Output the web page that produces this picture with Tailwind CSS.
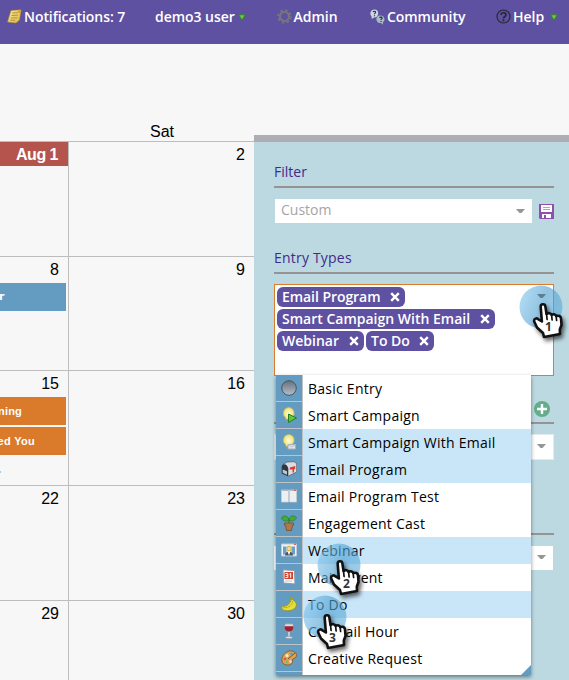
<!DOCTYPE html>
<html lang="en">
<head>
<meta charset="utf-8">
<title>Calendar</title>
<script src="https://cdn.jsdelivr.net/npm/@tailwindcss/browser@4"></script>
</head>
<body class="w-[569px] h-[680px] overflow-hidden relative bg-[#f7f7f7] font-['Open_Sans',sans-serif]">
<svg width="0" height="0" class="absolute">
  <defs>
    <linearGradient id="note" x1="0" y1="0" x2="1" y2="1"><stop offset="0" stop-color="#fff3a0"/><stop offset="1" stop-color="#d9b23c"/></linearGradient>
    <linearGradient id="ball" x1="0" y1="0" x2="0" y2="1"><stop offset="0" stop-color="#66707c"/><stop offset="1" stop-color="#b4c0cc"/></linearGradient>
    <radialGradient id="bulbg"><stop offset="0" stop-color="#fffde0"/><stop offset="1" stop-color="#efe06a"/></radialGradient>
    <linearGradient id="halo" x1="0" y1=".3" x2="1" y2=".7"><stop offset="0" stop-color="#7fc4ec" stop-opacity=".62"/><stop offset=".5" stop-color="#4f9fd0" stop-opacity=".62"/><stop offset="1" stop-color="#5aaada" stop-opacity=".58"/></linearGradient>
    <symbol id="bulb" viewBox="0 0 16 16"><path d="M8 .5a5.600 5.600 0 0 0-3.500 10l1 2.500h4.500l1-2.500A5.600 5.600 0 0 0 8 .5z" fill="url(#bulbg)" stroke="#c9b95c" stroke-width=".7"/><path d="M5.800 12h4.400v2L9 15.500H7L5.800 14z" fill="#8d949b"/></symbol>
    <symbol id="hand" viewBox="-2 -2 34 40">
      <path d="M7.700 4C7.500 .6 12 .4 12.400 3.600L13.500 11C15 9.500 18.200 10.200 18.600 12 20.500 10.500 23 11.600 23.200 13.200 25.500 12 27.800 13.200 28 15.400L28.500 22 26.800 26.500 27 31 11 34 10 30 4 24.500 1.200 18.500C.5 15.500 4 14.500 5.500 16.500L8.900 18.500z" fill="#fff" stroke="#111" stroke-width="2.600" stroke-linejoin="round"/>
      <path d="M13.500 11l.6 5.500M18.600 12l.5 5M23.200 13.500l.4 4" stroke="#111" stroke-width="1.700" fill="none" stroke-linecap="round"/>
    </symbol>
  </defs>
</svg>

<header class="h-11 bg-[#5f51a1] text-white text-[14px] font-semibold leading-[34px] flex whitespace-nowrap">
  <div class="w-[155px] pl-[7px] flex">
    <svg class="mt-[9px] mr-[2px]" width="15" height="15" viewBox="0 0 15 15"><path d="M4 1.500 14 .8 12.500 11 9 14 .5 13z" fill="url(#note)" stroke="#a48a35" stroke-width=".6"/><path d="M5 4l6-.4M4.500 6.500l6.500-.4M3.800 9l6.500-.2M3.200 11.200l5 .1" stroke="#b3923a" stroke-width="1"/><circle cx="12.500" cy="2.500" r="1.600" fill="#e59d2e"/></svg>
    <span class="tracking-[-0.060px]">Notifications: 7</span>
  </div>
  <div class="w-[122px] flex"><span class="tracking-[-0.040px]">demo3 user</span><svg class="mt-[13.500px] ml-[3px]" width="8" height="7" viewBox="0 0 8 7"><path d="M.8.800h6.400L4 6.300z" fill="#6cc83c" stroke="#2d8526" stroke-width=".9"/></svg></div>
  <div class="w-[93px] flex">
    <svg class="mt-[9px] mr-[1.500px]" width="15" height="15" viewBox="0 0 15 15"><circle cx="7.500" cy="7.500" r="4.500" fill="none" stroke="#77757b" stroke-width="2.200"/><circle cx="7.500" cy="7.500" r="6.200" fill="none" stroke="#77757b" stroke-width="2" stroke-dasharray="2.430 2.430"/></svg>Admin</div>
  <div class="w-[126px] flex">
    <svg class="mt-[9px] mr-[2px]" width="15" height="16" viewBox="0 0 15 16"><path d="M4.500.5a4 4 0 0 0-3 6.800L1.800 10l2-1.500A4 4 0 1 0 4.500.5z" fill="#ccd7e2"/><path d="M11 6.500a4 3.800 0 1 0 0 7.500l1.800 1.700.2-2.500a4 3.800 0 0 0-2-6.700z" fill="#aab9c6"/><path d="M3.200 3.200c.3-1.500 3-1 2.300.5-.3.500-1 .7-1 1.500M4.500 6.300v1M9.700 9c.3-1.500 3-1 2.300.5-.3.500-1 .7-1 1.500M11 12v1" stroke="#222b38" stroke-width="1.100" fill="none"/></svg><span class="tracking-[-0.060px]">Community</span></div>
  <div class="flex">
    <svg class="mt-[9px] mr-[2px]" width="15" height="15" viewBox="0 0 15 15"><circle cx="7.500" cy="7.500" r="6.500" fill="none" stroke="#292637" stroke-width="1.200"/><path d="M5 6C5 3 10 3 10 5.800c0 1.700-2.500 1.700-2.500 3.700" stroke="#292637" stroke-width="1.700" fill="none"/><circle cx="7.500" cy="11.300" r="1.100" fill="#292637"/></svg>Help<svg class="mt-[13.500px] ml-[6px]" width="8" height="7" viewBox="0 0 8 7"><path d="M.8.800h6.400L4 6.300z" fill="#6cc83c" stroke="#2d8526" stroke-width=".9"/></svg></div>
</header>

<div class="flex h-[636px] overflow-hidden">
  <main class="w-[254px] pt-[77px] font-['Liberation_Sans',sans-serif] text-[16px] text-black">
    <div class="h-5 pl-[70px] text-center leading-[21px]">Sat</div>
    <div class="grid grid-cols-[69px_185px] grid-rows-[115px_114px_115px_115px_80px] text-right leading-[18px]">
      <div class="border-t border-r border-[#bdbdbd]"><div class="bg-[#b4544d] text-white font-bold h-6 leading-[25px] pr-[10px] tracking-[-0.500px]">Aug 1</div></div>
      <div class="border-t border-[#bdbdbd] pt-[4px] pr-[9px]">2</div>
      <div class="border-t border-r border-[#bdbdbd] pt-[4px]"><div class="pr-[9px]">8</div><div class="mt-[4px] mr-[2px] h-7 bg-[#639bc1] text-white text-left font-bold text-[11px] leading-7 font-['DejaVu_Sans',sans-serif]"><span class="-ml-px">r</span></div></div>
      <div class="border-t border-[#bdbdbd] pt-[4px] pr-[9px]">9</div>
      <div class="border-t border-r border-[#bdbdbd] pt-[4px]"><div class="pr-[9px]">15</div>
        <div class="mt-[4px] mr-[2px] h-7 bg-[#d97b2b] text-white font-bold text-[11px] leading-7 pr-[44px] flex justify-end whitespace-nowrap tracking-[0.200px]">ning</div>
        <div class="mt-[2px] mr-[2px] h-7 bg-[#d97b2b] text-white font-bold text-[11px] leading-7 pr-[31px] flex justify-end whitespace-nowrap tracking-[0.300px]">ed You</div>
        <div class="mt-[16px] w-px h-[2px] bg-[#9fcbe8]"></div></div>
      <div class="border-t border-[#bdbdbd] pt-[4px] pr-[9px]">16</div>
      <div class="border-t border-r border-[#bdbdbd] pt-[4px] pr-[9px]">22</div>
      <div class="border-t border-[#bdbdbd] pt-[4px] pr-[9px]">23</div>
      <div class="border-t border-r border-[#bdbdbd] pt-[4px] pr-[9px]">29</div>
      <div class="border-t border-[#bdbdbd] pt-[4px] pr-[9px]">30</div>
    </div>
  </main>

  <aside class="mt-[91px] w-[315px] h-[545px] border-t-[7px] border-[#adadb3] bg-[#bcd9e1] pl-5 pr-[15px] text-[14px]">
    <h2 class="h-[46px] pt-[20px] leading-5 text-[#3e2b8c] border-b-2 border-[#969395]">Filter</h2>
    <div class="mt-[11px] flex pl-px">
      <div class="w-[257px] h-6 bg-white pl-[6px] pr-[7px] leading-[22px] text-[#a5a5a5] flex justify-between"><span>Custom</span><svg class="mt-[10px]" width="9" height="5"><path d="M0 0h9L5.500 4h-2z" fill="#969696"/></svg></div>
      <svg class="ml-[7px] mt-[5px]" width="15" height="15" viewBox="0 0 15 15"><path d="M0 0h15v15H1l-1-1z" fill="#8e4fae"/><path d="M2 1h11v7H2zM3 10h9v4H3z" fill="#fff"/><path d="M4 3h7v1H4zM4 5h7v1H4z" fill="#aaa"/><path d="M5 11h2v3H5z" fill="#8e4fae"/></svg>
    </div>
    <h2 class="mt-[23px] h-[28px] pt-[2px] leading-5 text-[#3e2b8c] border-b-2 border-[#969395] tracking-[0.200px]">Entry Types</h2>
    <div class="mt-[10px] h-[92px] border border-[#db7b2b] bg-white p-[2px] flex flex-wrap content-start gap-[2px] text-white font-semibold leading-[19px]">
      <div class="w-[128px] h-5 rounded-[6px] bg-[#5f51a1] pl-[5px] pr-[5px] flex justify-between"><span class="tracking-[-0.060px]">Email Program</span><svg class="mt-[5px]" width="10" height="10"><path d="M1.200 1.200l7.600 7.600M8.800 1.200l-7.600 7.600" stroke="#fff" stroke-width="2.400"/></svg></div>
      <div class="w-[218px] h-5 rounded-[6px] bg-[#5f51a1] pl-[5px] pr-[5px] flex justify-between"><span>Smart Campaign With Email</span><svg class="mt-[5px]" width="10" height="10"><path d="M1.200 1.200l7.600 7.600M8.800 1.200l-7.600 7.600" stroke="#fff" stroke-width="2.400"/></svg></div>
      <div class="w-[87px] h-5 rounded-[6px] bg-[#5f51a1] pl-[5px] pr-[5px] flex justify-between"><span>Webinar</span><svg class="mt-[5px]" width="10" height="10"><path d="M1.200 1.200l7.600 7.600M8.800 1.200l-7.600 7.600" stroke="#fff" stroke-width="2.400"/></svg></div>
      <div class="w-[68px] h-5 rounded-[6px] bg-[#5f51a1] pl-[5px] pr-[5px] flex justify-between"><span>To Do</span><svg class="mt-[5px]" width="10" height="10"><path d="M1.200 1.200l7.600 7.600M8.800 1.200l-7.600 7.600" stroke="#fff" stroke-width="2.400"/></svg></div>
    </div>
    <div class="mt-[25px] h-[23px] border-b-2 border-[#969395] flex justify-end pr-[4px]"><svg width="16" height="16"><circle cx="8" cy="8" r="8" fill="#63ad88"/><path d="M3 8h10M8 3v10" stroke="#fff" stroke-width="2.400"/></svg></div>
    <div class="mt-[10px] h-[26px] bg-white border border-[#e2ecee] flex justify-end pr-[7px]"><svg class="mt-[9px]" width="9" height="5"><path d="M0 0h9L5.500 4h-2z" fill="#969696"/></svg></div>
    <div class="mt-[73px] h-[2px] bg-[#969395]"></div>
    <div class="mt-[11px] mr-px h-6 bg-white flex justify-end pr-[7px]"><svg class="mt-[9px]" width="9" height="5"><path d="M0 0h9L5.500 4h-2z" fill="#969696"/></svg></div>
  </aside>
</div>

<ul class="absolute left-[276px] top-[375px] w-[255px] h-[300px] overflow-hidden bg-white text-black text-[14px] leading-[27px] whitespace-nowrap shadow-[0_2px_4px_rgba(0,0,0,.45)] tracking-[0.250px]">
  <li class="flex h-[27px]"><span class="w-[27px] bg-[#639bc1] border-r border-b border-[#bfc3c6] pl-[5px] pt-[5px] mr-[5px]"><svg width="16" height="16"><circle cx="8" cy="8" r="7.300" fill="url(#ball)" stroke="#4a545f"/></svg></span>Basic Entry</li>
  <li class="flex h-[27px]"><span class="w-[27px] bg-[#639bc1] border-r border-b border-[#bfc3c6] pl-[5px] pt-[5px] mr-[5px]"><svg width="16" height="16"><use href="#bulb" width="16" height="16"/><path d="M7.500 7v8.500L15.500 11z" fill="#62c43d" stroke="#257f21"/></svg></span>Smart Campaign</li>
  <li class="flex h-[27px] bg-[#c9e6f8]"><span class="w-[27px] bg-[#639bc1] border-r border-b border-[#bfc3c6] pl-[5px] pt-[5px] mr-[5px]"><svg width="16" height="16"><use href="#bulb" width="16" height="16"/><path d="M7 10.500h7.500v4.500H7z" fill="#e4e7ea" stroke="#a7afb7"/><path d="M7 10.500l3.700 2.500 3.800-2.500" fill="none" stroke="#b8bec5"/></svg></span>Smart Campaign With Email</li>
  <li class="flex h-[27px] bg-[#c9e6f8]"><span class="w-[27px] bg-[#639bc1] border-r border-b border-[#bfc3c6] pl-[5px] pt-[5px] mr-[5px]"><svg width="16" height="16"><path d="M2 3.500l4-2.500 7-.3c2 .5 2.700 2 2.700 4V11L7 15.300V7z" fill="#d9dee2" stroke="#5c656d" stroke-width=".8"/><path d="M.7 6.500C.5 1.800 6.500 2.300 7 7v8.300L.7 12.500z" fill="#2f363e"/><path d="M1.700 8.500l4.300 1.700v3.500l-4.300-2z" fill="#b9c9da"/><path d="M8.800 6.500l5.400-1.500v3l-1.200.3v3.200h-1.500V8.200l-2.700.6z" fill="#e13b2d"/></svg></span>Email Program</li>
  <li class="flex h-[27px]"><span class="w-[27px] bg-[#639bc1] border-r border-b border-[#bfc3c6] pl-[5px] pt-[5px] mr-[5px]"><svg width="16" height="16"><path d="M.5 2h7v12h-7zM8.500 2h7v12h-7z" fill="#edf0f2" stroke="#c9ced3" stroke-width=".8"/><path d="M1 2.500h6M9 2.500h4" stroke="#aeb9c2"/><path d="M13 1.500h2v1.500h-2z" fill="#e6604d"/></svg></span>Email Program Test</li>
  <li class="flex h-[27px]"><span class="w-[27px] bg-[#639bc1] border-r border-b border-[#bfc3c6] pl-[5px] pt-[5px] mr-[5px]"><svg width="16" height="16"><path d="M8 9V4" stroke="#2e8a29" stroke-width="1.500"/><path d="M8 5C6 7 1 6 .5 3 2 0 7 0 8 5zM8 5c0-4 5-5.500 7.500-2.500C14 6 10 7 8 5z" fill="#43ac38" stroke="#23751f" stroke-width=".6"/><path d="M3.500 8h9v2.200h-1L10.500 15.500h-5L4.500 10.200h-1z" fill="#b27745" stroke="#754721" stroke-width=".7"/></svg></span>Engagement Cast</li>
  <li class="flex h-[27px] bg-[#c9e6f8]"><span class="w-[27px] bg-[#639bc1] border-r border-b border-[#bfc3c6] pl-[5px] pt-[5px] mr-[5px]"><svg width="16" height="16"><path d="M.5 2h15v12H.5z" fill="#edf3f8" stroke="#c3ccd4"/><path d="M13 1.500h2V3h-2z" fill="#e6604d"/><path d="M2 4.500h3.500v8H2zM10.500 4.500H14v8h-3.500z" fill="#6f9fc6"/><path d="M5.500 7C5 2.500 11 2.500 10.500 7L9.500 9.500h-3z" fill="#d8b445"/><circle cx="8" cy="6.500" r="1.500" fill="#f5dfaa"/><path d="M4 13.500c0-5.500 8-5.500 8 0z" fill="#4c555e"/><path d="M6.500 9.200h3L8 13.500z" fill="#fff"/></svg></span>Webinar</li>
  <li class="flex h-[27px]"><span class="w-[27px] bg-[#639bc1] border-r border-b border-[#bfc3c6] pl-[5px] pt-[5px] mr-[5px]"><svg width="16" height="16"><path d="M2 .8l11.500.7L14 15l-11.500-1z" fill="#f6f7f9" stroke="#8c98ae"/><path d="M3.500 3h8.500v7H3.500z" fill="#d64229"/><path d="M4.500 4.500h2.300v4H4.500M4.800 6.500h2M8.500 5.200l1.200-.8v4.400" fill="none" stroke="#fff" stroke-width="1"/><path d="M4 12h7" stroke="#c5c9d3"/></svg></span>Main Event</li>
  <li class="flex h-[27px] bg-[#c9e6f8]"><span class="w-[27px] bg-[#639bc1] border-r border-b border-[#bfc3c6] pl-[5px] pt-[5px] mr-[5px]"><svg width="16" height="16"><path d="M9 1.500l2-.7 1 3.200c3.500 2 4.500 5.500 2 8-2.500 2.800-8.500 3.500-11.500 2C.8 13.200.3 11.500.8 10.200 3 10.800 8 10 9.800 4.500z" fill="#e8dc39" stroke="#8f9420" stroke-width=".8"/><path d="M11.300 5c1 3.500-3 6.800-9 6.700" stroke="#b4b52a" fill="none"/><path d="M9 1.500l2-.7.7 2.700-1.900.7z" fill="#8bab2b"/></svg></span>To Do</li>
  <li class="flex h-[27px]"><span class="w-[27px] bg-[#639bc1] border-r border-b border-[#bfc3c6] pl-[5px] pt-[5px] mr-[5px]"><svg width="16" height="16"><path d="M4 .8h8c1.200 5 0 8.200-4 8.200S2.800 5.800 4 .8z" fill="#d9dde4" stroke="#8e8fa0" stroke-width=".7"/><path d="M3.700 3.300h8.600C12.700 7 11 8.500 8 8.500S3.300 7 3.700 3.300z" fill="#9d2331"/><path d="M8 9v5.500" stroke="#d7dce2" stroke-width="1.500"/><ellipse cx="8" cy="14.500" rx="3.500" ry="1.200" fill="#d8dde4" stroke="#7f8a96" stroke-width=".5"/></svg></span>Cocktail Hour</li>
  <li class="flex h-[27px]"><span class="w-[27px] bg-[#639bc1] border-r border-b border-[#bfc3c6] pl-[5px] pt-[5px] mr-[5px]"><svg width="16" height="16"><path d="M1 11C0 5 6 0 11 1c5 .8 5.500 5.500 3 7-2 1-3 .5-2.500 3S9 15.500 6 15 1.500 13.500 1 11z" fill="#dda452" stroke="#85521e" stroke-width=".8"/><circle cx="6" cy="5.500" r="1.500" fill="#fff0bd"/><circle cx="10.500" cy="4" r="1.400" fill="#58a1d1"/><circle cx="4" cy="9" r="1.300" fill="#d84f6c"/><circle cx="6" cy="12" r="1.400" fill="#74bd69"/><circle cx="9.500" cy="11.500" r="1.200" fill="#ecdcf3"/><path d="M7 9l7-6" stroke="#79502c"/></svg></span>Creative Request</li>
  <li class="h-[3px] w-[27px] bg-[#639bc1] border-r border-[#bfc3c6]"></li>
</ul>
<svg class="absolute left-[521px] top-[665px]" width="10" height="10"><path d="M10 0v10H0z" fill="#639bc1"/></svg>

<!-- numbered pointers over the controls -->
<div class="absolute left-[519px] top-[285px] w-[44px] h-[56px]"><svg class="absolute" width="44" height="44"><circle cx="22" cy="22" r="21.500" fill="url(#halo)"/><path d="M18 9h9L23.500 13h-2z" fill="#5d7f92"/></svg><svg class="absolute left-[11.500px] top-[15.500px] drop-shadow-[2px_3px_2px_rgba(0,0,0,.6)]" width="34" height="40"><use href="#hand" width="34" height="40"/></svg><b class="absolute left-[26px] top-[35px] leading-[14px] text-[12px] text-[#333]">1</b></div>
<div class="absolute left-[317px] top-[543px] w-[44px] h-[56px]"><svg class="absolute" width="44" height="44"><circle cx="22" cy="22" r="21.500" fill="url(#halo)"/></svg><svg class="absolute left-[11px] top-[15px] drop-shadow-[2px_3px_2px_rgba(0,0,0,.6)]" width="34" height="40"><use href="#hand" width="34" height="40"/></svg><b class="absolute left-[26px] top-[34px] leading-[14px] text-[12px] text-[#333]">2</b></div>
<div class="absolute left-[303px] top-[595px] w-[44px] h-[56px]"><svg class="absolute" width="44" height="44"><circle cx="22" cy="22" r="21.500" fill="url(#halo)"/></svg><svg class="absolute left-[11.500px] top-[17px] drop-shadow-[2px_3px_2px_rgba(0,0,0,.6)]" width="34" height="40"><use href="#hand" width="34" height="40"/></svg><b class="absolute left-[26px] top-[36px] leading-[14px] text-[12px] text-[#333]">3</b></div>
</body>
</html>
